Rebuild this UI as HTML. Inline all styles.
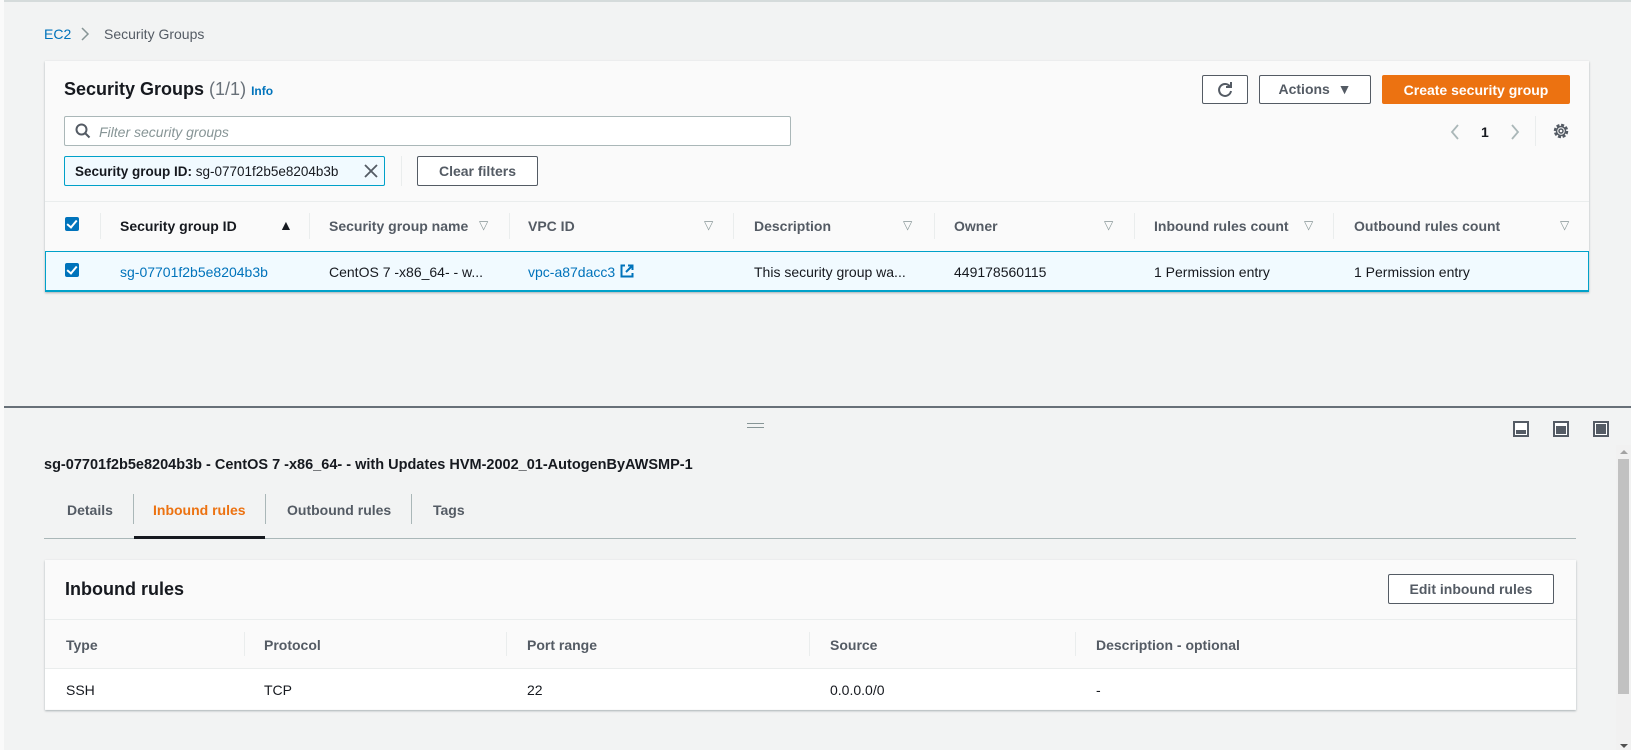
<!DOCTYPE html>
<html><head><meta charset="utf-8"><style>
*{box-sizing:border-box;margin:0;padding:0}
body{width:1631px;height:750px;overflow:hidden;background:#f2f3f3;font-family:"Liberation Sans",sans-serif;font-size:14px;color:#16191f;position:relative}
.a{position:absolute;white-space:nowrap}
.b{font-weight:bold}
.hd{color:#545b64;font-weight:bold}
.tri{color:#879596;font-size:12px}
.btn{position:absolute;border:1px solid #545b64;border-radius:2px;background:#fff;color:#545b64;font-weight:bold;text-align:center}
.vd{position:absolute;width:1px;background:#eaeded}
.cb{position:absolute;width:14px;height:14px;background:#0073bb;border-radius:2px}
.cb:after{content:"";position:absolute;left:4px;top:1px;width:4px;height:8px;border:solid #fff;border-width:0 2px 2px 0;transform:rotate(40deg)}
</style></head><body>
<div class="a" style="left:0;top:0;width:1631px;height:2px;background:#d5dbdb"></div>
<div class="a" style="left:0;top:0;width:4px;height:750px;background:#fafafa"></div>
<div class="a" style="left:44px;top:26px;font-size:14px;color:#0073bb">EC2</div>
<svg class="a" style="left:80px;top:26px" width="10" height="16"><path d="M2 2l6 6-6 6" fill="none" stroke="#879596" stroke-width="1.5"/></svg>
<div class="a" style="left:104px;top:26px;color:#545b64">Security Groups</div>

<div class="a" style="left:45px;top:61px;width:1544px;height:231px;background:#fafafa;box-shadow:0 1px 2px rgba(0,28,36,.3)"></div>
<div class="a b" style="left:64px;top:79px;font-size:18px">Security Groups <span style="font-weight:normal;color:#687078">(1/1)</span> <span style="font-size:12px;color:#0073bb">Info</span></div>
<div class="btn" style="left:1202px;top:75px;width:46px;height:29px"><svg width="20" height="20" style="margin-top:4px" viewBox="0 0 20 20"><path d="M15 6.5A6 6 0 1 0 16 11" fill="none" stroke="#545b64" stroke-width="2"/><path d="M16 2v5h-5" fill="none" stroke="#545b64" stroke-width="2"/></svg></div>
<div class="btn" style="left:1259px;top:75px;width:112px;height:29px;line-height:27px">Actions &nbsp;<span style="font-size:14px">▼</span></div>
<div class="btn" style="left:1382px;top:75px;width:188px;height:29px;line-height:29px;background:#ec7211;border-color:#ec7211;color:#fff">Create security group</div>

<div class="a" style="left:64px;top:116px;width:727px;height:30px;background:#fff;border:1px solid #aab7b8;border-radius:2px"></div>
<svg class="a" style="left:75px;top:123px" width="16" height="16"><circle cx="6.5" cy="6.5" r="5" fill="none" stroke="#545b64" stroke-width="2"/><path d="M10 10l4.5 4.5" stroke="#545b64" stroke-width="2"/></svg>
<div class="a" style="left:99px;top:124px;color:#879596;font-style:italic">Filter security groups</div>

<svg class="a" style="left:1449px;top:123px" width="12" height="18"><path d="M9 2L3 9l6 7" fill="none" stroke="#aab7b8" stroke-width="1.8"/></svg>
<div class="a b" style="left:1481px;top:124px;font-size:14px">1</div>
<svg class="a" style="left:1509px;top:123px" width="12" height="18"><path d="M3 2l6 7-6 7" fill="none" stroke="#aab7b8" stroke-width="1.8"/></svg>
<div class="vd" style="left:1535px;top:116px;height:30px"></div>
<svg class="a" style="left:1552px;top:122px" width="18" height="18" viewBox="0 0 18 18"><circle cx="9" cy="9" r="6" fill="none" stroke="#545b64" stroke-width="2.5" stroke-dasharray="3 1.7"/><circle cx="9" cy="9" r="4.5" fill="none" stroke="#545b64" stroke-width="1.5"/><circle cx="9" cy="9" r="2" fill="none" stroke="#545b64" stroke-width="1.5"/></svg>

<div class="a" style="left:64px;top:156px;width:321px;height:30px;background:#f1faff;border:1px solid #00a1c9;border-radius:2px"></div>
<div class="a" style="left:75px;top:164px;font-size:13.5px"><b>Security group ID:</b> sg-07701f2b5e8204b3b</div>
<svg class="a" style="left:363px;top:163px" width="16" height="16"><path d="M2 2l12 12M14 2L2 14" stroke="#545b64" stroke-width="1.8"/></svg>
<div class="vd" style="left:401px;top:156px;height:30px"></div>
<div class="btn" style="left:417px;top:156px;width:121px;height:30px;line-height:28px">Clear filters</div>

<div class="a" style="left:45px;top:201px;width:1544px;height:1px;background:#eaeded"></div>
<div class="cb" style="left:65px;top:217px"></div>
<div class="vd" style="left:100px;top:213px;height:26px"></div>
<div class="a b" style="left:120px;top:218px">Security group ID</div><div class="a" style="left:279px;top:217px;font-size:14px">▲</div>
<div class="vd" style="left:309px;top:213px;height:26px"></div>
<div class="a hd" style="left:329px;top:218px">Security group name</div><div class="a tri" style="left:479px;top:218px">▽</div>
<div class="vd" style="left:509px;top:213px;height:26px"></div>
<div class="a hd" style="left:528px;top:218px">VPC ID</div><div class="a tri" style="left:704px;top:218px">▽</div>
<div class="vd" style="left:733px;top:213px;height:26px"></div>
<div class="a hd" style="left:754px;top:218px">Description</div><div class="a tri" style="left:903px;top:218px">▽</div>
<div class="vd" style="left:934px;top:213px;height:26px"></div>
<div class="a hd" style="left:954px;top:218px">Owner</div><div class="a tri" style="left:1104px;top:218px">▽</div>
<div class="vd" style="left:1134px;top:213px;height:26px"></div>
<div class="a hd" style="left:1154px;top:218px">Inbound rules count</div><div class="a tri" style="left:1304px;top:218px">▽</div>
<div class="vd" style="left:1333px;top:213px;height:26px"></div>
<div class="a hd" style="left:1354px;top:218px">Outbound rules count</div><div class="a tri" style="left:1560px;top:218px">▽</div>

<div class="a" style="left:45px;top:251px;width:1544px;height:41px;background:#f1faff;border:1px solid #00a1c9;border-bottom-width:2px"></div>
<div class="cb" style="left:65px;top:263px"></div>
<div class="a" style="left:120px;top:264px;color:#0073bb">sg-07701f2b5e8204b3b</div>
<div class="a" style="left:329px;top:264px">CentOS 7 -x86_64- - w...</div>
<div class="a" style="left:528px;top:264px;color:#0073bb">vpc-a87dacc3</div>
<svg class="a" style="left:620px;top:264px" width="14" height="14"><path d="M5 1.5H1.5v11h11V9M8 1.5h4.5V6M12.5 1.5L6 8" fill="none" stroke="#0073bb" stroke-width="2"/></svg>
<div class="a" style="left:754px;top:264px">This security group wa...</div>
<div class="a" style="left:954px;top:264px">449178560115</div>
<div class="a" style="left:1154px;top:264px">1 Permission entry</div>
<div class="a" style="left:1354px;top:264px">1 Permission entry</div>

<div class="a" style="left:4px;top:406px;width:1627px;height:2px;background:#687078"></div>
<div class="a" style="left:747px;top:423px;width:17px;height:1px;background:#879596"></div>
<div class="a" style="left:747px;top:427px;width:17px;height:1px;background:#879596"></div>
<div class="a" style="left:1513px;top:421px;width:16px;height:16px;border:2px solid #545b64;background:#fff"><div style="position:absolute;left:1px;right:1px;bottom:1px;height:4px;background:#545b64"></div></div>
<div class="a" style="left:1553px;top:421px;width:16px;height:16px;border:2px solid #545b64;background:#fff"><div style="position:absolute;left:1px;right:1px;bottom:1px;height:8px;background:#545b64"></div></div>
<div class="a" style="left:1593px;top:421px;width:16px;height:16px;border:2px solid #545b64;background:#fff"><div style="position:absolute;left:1px;right:1px;bottom:1px;top:1px;background:#545b64"></div></div>

<div class="a" style="left:1616px;top:445px;width:15px;height:305px;background:#f1f1f1"></div>
<div class="a" style="left:1620px;top:450px;width:0;height:0;border-left:4px solid transparent;border-right:4px solid transparent;border-bottom:4px solid #a3a3a3"></div>
<div class="a" style="left:1618px;top:459px;width:11px;height:235px;background:#c1c1c1"></div>
<div class="a" style="left:1620px;top:744px;width:0;height:0;border-left:4px solid transparent;border-right:4px solid transparent;border-top:4px solid #505050"></div>

<div class="a b" style="left:44px;top:457px;font-size:14.5px">sg-07701f2b5e8204b3b - CentOS 7 -x86_64- - with Updates HVM-2002_01-AutogenByAWSMP-1</div>
<div class="a hd" style="left:67px;top:502px">Details</div>
<div class="vd" style="left:133px;top:494px;height:30px;background:#aab7b8"></div>
<div class="a b" style="left:153px;top:502px;color:#ec7211">Inbound rules</div>
<div class="vd" style="left:265px;top:494px;height:30px;background:#aab7b8"></div>
<div class="a hd" style="left:287px;top:502px">Outbound rules</div>
<div class="vd" style="left:411px;top:494px;height:30px;background:#aab7b8"></div>
<div class="a hd" style="left:433px;top:502px">Tags</div>
<div class="a" style="left:44px;top:538px;width:1532px;height:1px;background:#aab7b8"></div>
<div class="a" style="left:134px;top:536px;width:131px;height:3px;background:#16191f"></div>

<div class="a" style="left:45px;top:560px;width:1531px;height:150px;background:#fafafa;box-shadow:0 1px 2px rgba(0,28,36,.3)"></div>
<div class="a b" style="left:65px;top:579px;font-size:18px">Inbound rules</div>
<div class="btn" style="left:1388px;top:574px;width:166px;height:30px;line-height:28px">Edit inbound rules</div>
<div class="a" style="left:45px;top:619px;width:1531px;height:1px;background:#eaeded"></div>
<div class="a hd" style="left:66px;top:637px">Type</div>
<div class="vd" style="left:244px;top:632px;height:24px"></div>
<div class="a hd" style="left:264px;top:637px">Protocol</div>
<div class="vd" style="left:506px;top:632px;height:24px"></div>
<div class="a hd" style="left:527px;top:637px">Port range</div>
<div class="vd" style="left:809px;top:632px;height:24px"></div>
<div class="a hd" style="left:830px;top:637px">Source</div>
<div class="vd" style="left:1075px;top:632px;height:24px"></div>
<div class="a hd" style="left:1096px;top:637px">Description - optional</div>
<div class="a" style="left:45px;top:668px;width:1531px;height:41px;background:#fff;border-top:1px solid #eaeded"></div>
<div class="a" style="left:66px;top:682px">SSH</div>
<div class="a" style="left:264px;top:682px">TCP</div>
<div class="a" style="left:527px;top:682px">22</div>
<div class="a" style="left:830px;top:682px">0.0.0.0/0</div>
<div class="a" style="left:1096px;top:682px">-</div>
</body></html>
